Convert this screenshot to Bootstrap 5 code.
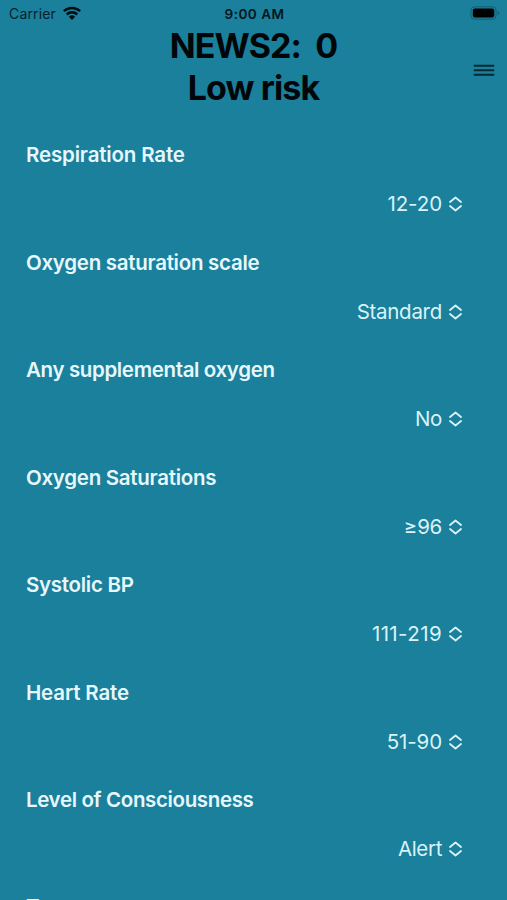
<!DOCTYPE html>
<html lang="en">
<head>
<meta charset="utf-8">
<meta name="viewport" content="width=device-width, initial-scale=1">
<title>NEWS2</title>
<link href="https://cdn.jsdelivr.net/npm/bootstrap@5.3.0/dist/css/bootstrap.min.css" rel="stylesheet">
<style>
body{background:#1a809c;font-family:Inter,"Liberation Sans",sans-serif}
.screen{height:900px}
.status-bar{height:28px;font-size:14px;line-height:28px;color:#06222b;padding:0 7px 0 9px}
.carrier{letter-spacing:.15px}
.status-time{font-weight:600;font-size:13.6px;letter-spacing:.45px;color:#04161c}
.status-icon{margin-top:-2px}
.wifi{margin-left:7px}
.score-head{height:98px;display:flow-root}
.score-title{font-size:34px;line-height:42px;font-weight:700;color:#020608;margin-top:-3px;white-space:pre;letter-spacing:-.9px}
.menu-btn{right:12px;top:36px;line-height:0}
.field{height:107.5px;padding:0 45px 0 26px;color:#e6f8fc}
.field-label{font-size:20.5px;line-height:28px;font-weight:600;padding-top:15px;letter-spacing:-.16px}
.field:last-child .field-label{padding-top:14px}
.field-value{font-size:20.5px;line-height:28px;margin-top:21.4px;gap:7px;color:#d9f3f8;letter-spacing:-.1px}
.snug{letter-spacing:-.28px}
.snugger{letter-spacing:-.36px}
.airy{letter-spacing:.4px}
</style>
<script src="https://cdn.jsdelivr.net/npm/bootstrap@5.3.0/dist/js/bootstrap.bundle.min.js"></script>
</head>
<body class="overflow-hidden m-0">
<svg class="d-none"><symbol id="updown" viewBox="0 0 13 16"><path d="M1 6 6.500 1.500 12 6M1 10l5.500 4.500L12 10" fill="none" stroke="#d9f3f8" stroke-width="1.800" stroke-linecap="round" stroke-linejoin="round"/></symbol></svg>
<div class="screen overflow-hidden">
<header>
<div class="status-bar row g-0">
<div class="col d-flex align-items-center"><span class="carrier">Carrier</span>
<svg class="status-icon wifi" width="18" height="14" viewBox="0 0 18 14"><g fill="none" stroke="#020c10" stroke-width="2.500"><path d="M.9 5.200a11.600 11.600 0 0 1 16.200 0"/><path d="M3.800 8.500a7.400 7.400 0 0 1 10.400 0"/></g><path d="M9 14 5.900 10.800a4.500 4.500 0 0 1 6.200 0z" fill="#020c10"/></svg></div>
<div class="col-auto status-time">9:00 AM</div>
<div class="col d-flex align-items-center justify-content-end"><svg class="status-icon" width="30" height="14" viewBox="0 0 30 14"><rect x="1" y=".8" width="25" height="12.400" rx="3.500" fill="none" stroke="#125e72"/><rect x="2.800" y="2.600" width="21.400" height="8.800" rx="2" fill="#000"/><path d="M27.700 5v4q1.600-.6 1.600-2t-1.600-2z" fill="#125e72"/></svg></div>
</div>
<div class="score-head position-relative text-center">
<h1 class="score-title mb-0">NEWS2:  0
Low risk</h1>
<button class="menu-btn btn p-0 border-0 position-absolute" aria-label="Menu"><svg width="22" height="13" viewBox="0 0 22 13"><path d="M.8 1.800h20.400M.8 6.300h20.400M.8 10.800h20.400" stroke="#052832" stroke-width="1.900"/></svg></button>
</div>
</header>
<main>
<section class="field"><div class="field-label">Respiration Rate</div><div class="field-value d-flex justify-content-end align-items-center"><span>12-20</span><svg width="13" height="16"><use href="#updown"/></svg></div></section>
<section class="field"><div class="field-label snug">Oxygen saturation scale</div><div class="field-value d-flex justify-content-end align-items-center"><span class="snug">Standard</span><svg width="13" height="16"><use href="#updown"/></svg></div></section>
<section class="field"><div class="field-label snugger">Any supplemental oxygen</div><div class="field-value d-flex justify-content-end align-items-center"><span class="snugger">No</span><svg width="13" height="16"><use href="#updown"/></svg></div></section>
<section class="field"><div class="field-label snug">Oxygen Saturations</div><div class="field-value d-flex justify-content-end align-items-center"><span class="snug">≥96</span><svg width="13" height="16"><use href="#updown"/></svg></div></section>
<section class="field"><div class="field-label snug">Systolic BP</div><div class="field-value d-flex justify-content-end align-items-center"><span class="airy">111-219</span><svg width="13" height="16"><use href="#updown"/></svg></div></section>
<section class="field"><div class="field-label">Heart Rate</div><div class="field-value d-flex justify-content-end align-items-center"><span>51-90</span><svg width="13" height="16"><use href="#updown"/></svg></div></section>
<section class="field"><div class="field-label snugger">Level of Consciousness</div><div class="field-value d-flex justify-content-end align-items-center"><span class="snugger">Alert</span><svg width="13" height="16"><use href="#updown"/></svg></div></section>
<section class="field"><div class="field-label">T</div></section>
</main>
</div>
</body>
</html>
